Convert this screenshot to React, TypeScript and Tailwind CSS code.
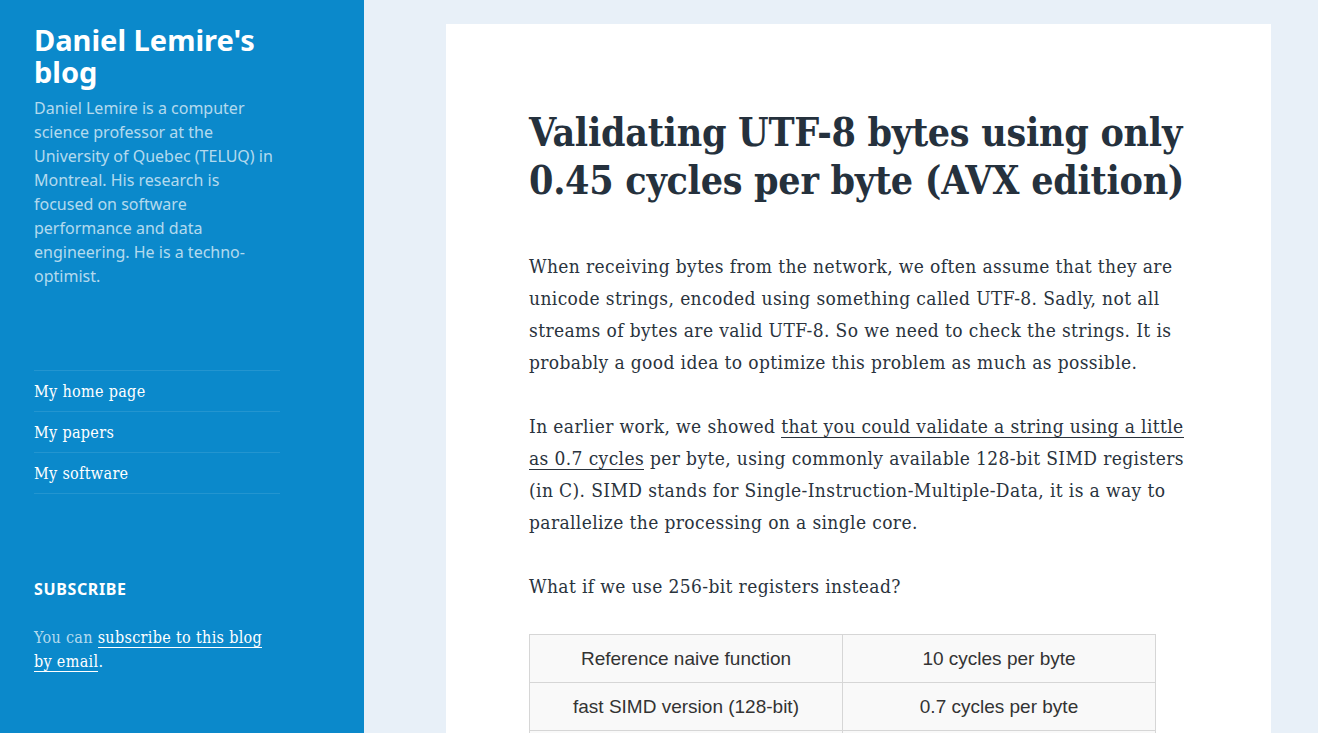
import React from 'react';

const serif = 'font-["DejaVu_Serif_Condensed","Liberation_Serif",serif] tracking-[0.02em]';

const menu = ['My home page', 'My papers', 'My software'];

const rows = [
  ['Reference naive function', '10 cycles per byte'],
  ['fast SIMD version (128-bit)', '0.7 cycles per byte'],
  ['AVX version (256-bit)', '0.45 cycles per byte'],
];

const Sidebar = () => (
  <aside className="w-[364px] shrink-0 bg-[#0b89cb] min-h-screen">
    <div className="px-[34px] pt-6 w-[314px]">
      <h1 className='font-["Noto_Sans",sans-serif] font-bold text-[29px] leading-[32px] text-white'>
        Daniel Lemire's blog
      </h1>
      <p className='mt-2 font-["Noto_Sans",sans-serif] text-[16px] leading-[24px] text-white/70'>
        Daniel Lemire is a computer science professor at the University of Quebec (TELUQ) in Montreal. His research is focused on software performance and data engineering. He is a techno-optimist.
      </p>

      <nav className="mt-[82px] border-t border-white/10">
        {menu.map((item) => (
          <a
            key={item}
            href="#"
            className={`block pt-[9px] pb-2 text-[16px] leading-[23px] text-white border-b border-white/10 ${serif}`}
          >
            {item}
          </a>
        ))}
      </nav>

      <section className="mt-[83px]">
        <h2 className='font-["Noto_Sans",sans-serif] font-bold text-[16px] leading-[24px] tracking-[0.04em] uppercase text-white'>
          Subscribe
        </h2>
        <p className={`mt-[25px] text-[16px] leading-[24px] text-white/70 ${serif}`}>
          You can{' '}
          <a href="#" className="text-white border-b border-white">
            subscribe to this blog by email
          </a>
          <span className="text-white">.</span>
        </p>
      </section>
    </div>
  </aside>
);

const Post = () => (
  <article className="bg-white ml-[82px] mt-6 w-[825px] px-[83px] pt-[84px] pb-16">
    <h1 className='font-["DejaVu_Serif_Condensed","Liberation_Serif",serif] tracking-[-0.007em] font-bold text-[39px] leading-[48px] text-[#25313d]'>
      Validating UTF-8 bytes using only 0.45 cycles per byte (AVX edition)
    </h1>
    <div className={`mt-[46px] text-[19px] leading-[32px] text-[#2a333d] ${serif}`}>
      <p>
        When receiving bytes from the network, we often assume that they are unicode strings, encoded using something called UTF-8. Sadly, not all streams of bytes are valid UTF-8. So we need to check the strings. It is probably a good idea to optimize this problem as much as possible.
      </p>
      <p className="mt-8">
        In earlier work, we showed{' '}
        <a href="#" className="border-b border-[#2a333d]">
          that you could validate a string using a little as 0.7 cycles
        </a>{' '}
        per byte, using commonly available 128-bit SIMD registers (in C). SIMD stands for Single-Instruction-Multiple-Data, it is a way to parallelize the processing on a single core.
      </p>
      <p className="mt-8">What if we use 256-bit registers instead?</p>

      <table className='mt-8 w-[627px] border-collapse font-["Liberation_Sans",Arial,sans-serif] tracking-normal text-[19px] text-[#333]'>
        <tbody>
          {rows.map((r) => (
            <tr key={r[0]}>
              {r.map((c) => (
                <td key={c} className="w-1/2 border border-[#d6d6d6] bg-[#f9f9f9] text-center py-2 leading-[31px]">
                  {c}
                </td>
              ))}
            </tr>
          ))}
        </tbody>
      </table>
    </div>
  </article>
);

export default function App() {
  return (
    <div className="flex bg-[#e8f0f8] min-h-screen overflow-hidden h-[733px]">
      <Sidebar />
      <main className="flex-1">
        <Post />
      </main>
    </div>
  );
}
